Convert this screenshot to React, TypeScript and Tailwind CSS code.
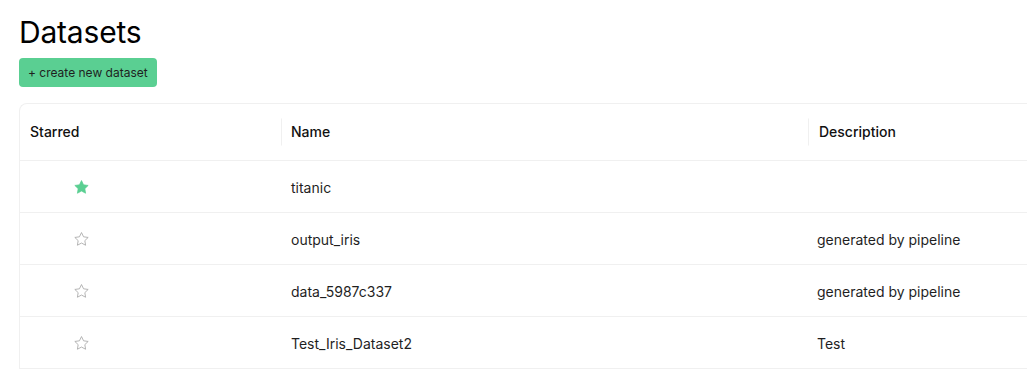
import React from "react";

const STAR = "12,2.2 14.9,8.2 21.4,9.1 16.7,13.6 17.8,20.1 12,17 6.2,20.1 7.3,13.6 2.6,9.1 9.1,8.2";

function Star({ filled }: { filled: boolean }) {
  return filled ? (
    <svg width="17" height="17" viewBox="0 0 24 24" className="block">
      <polygon points={STAR} fill="#5acf92" stroke="#5acf92" strokeWidth="1" strokeLinejoin="round" />
    </svg>
  ) : (
    <svg width="17" height="17" viewBox="0 0 24 24" className="block">
      <polygon points={STAR} fill="none" stroke="#a8a8a8" strokeWidth="1.2" strokeLinejoin="round" />
    </svg>
  );
}

const rows = [
  { starred: true, name: "titanic", desc: "" },
  { starred: false, name: "output_iris", desc: "generated by pipeline" },
  { starred: false, name: "data_5987c337", desc: "generated by pipeline" },
  { starred: false, name: "Test_Iris_Dataset2", desc: "Test" },
];

export default function App() {
  return (
    <div
      className="w-[1027px] h-[374px] overflow-hidden bg-white text-[#1f1f1f]"
      style={{ fontFamily: "Inter, 'Noto Sans', sans-serif" }}
    >
      <div className="pl-[19px] pt-[14px]">
        <h1 className="text-[30px] leading-[36px] font-normal text-black tracking-[-0.2px]">Datasets</h1>
        <button className="mt-[8px] h-[29px] px-[9px] rounded-[4px] bg-[#5acf92] text-[12px] text-[#1f1f1f] leading-none">
          + create new dataset
        </button>
        <div className="mt-[16px] w-[1100px] border-l border-t border-[#f0f0f0] rounded-tl-[8px]">
          <div className="grid grid-cols-[262px_527px_1fr] h-[57px] border-b border-[#f0f0f0] text-[14px] font-medium text-[#111]">
            <div className="relative flex items-center pl-[10px] pb-px">
              Starred
              <span className="absolute right-0 top-1/2 -translate-y-1/2 h-[27px] w-px bg-[#f0f0f0]" />
            </div>
            <div className="relative flex items-center pl-[9px] pb-px">
              Name
              <span className="absolute right-0 top-1/2 -translate-y-1/2 h-[27px] w-px bg-[#f0f0f0]" />
            </div>
            <div className="flex items-center pl-[10px] pb-px">Description</div>
          </div>
          {rows.map((r) => (
            <div
              key={r.name}
              className="grid grid-cols-[262px_527px_1fr] h-[52px] border-b border-[#f0f0f0] text-[14px] text-[#1f1f1f]"
            >
              <div className="flex items-center pl-[53px] pt-px">
                <Star filled={r.starred} />
              </div>
              <div className="flex items-center pl-[9px] pt-px">{r.name}</div>
              <div className="flex items-center pl-[8px] pt-px">{r.desc}</div>
            </div>
          ))}
        </div>
      </div>
    </div>
  );
}
